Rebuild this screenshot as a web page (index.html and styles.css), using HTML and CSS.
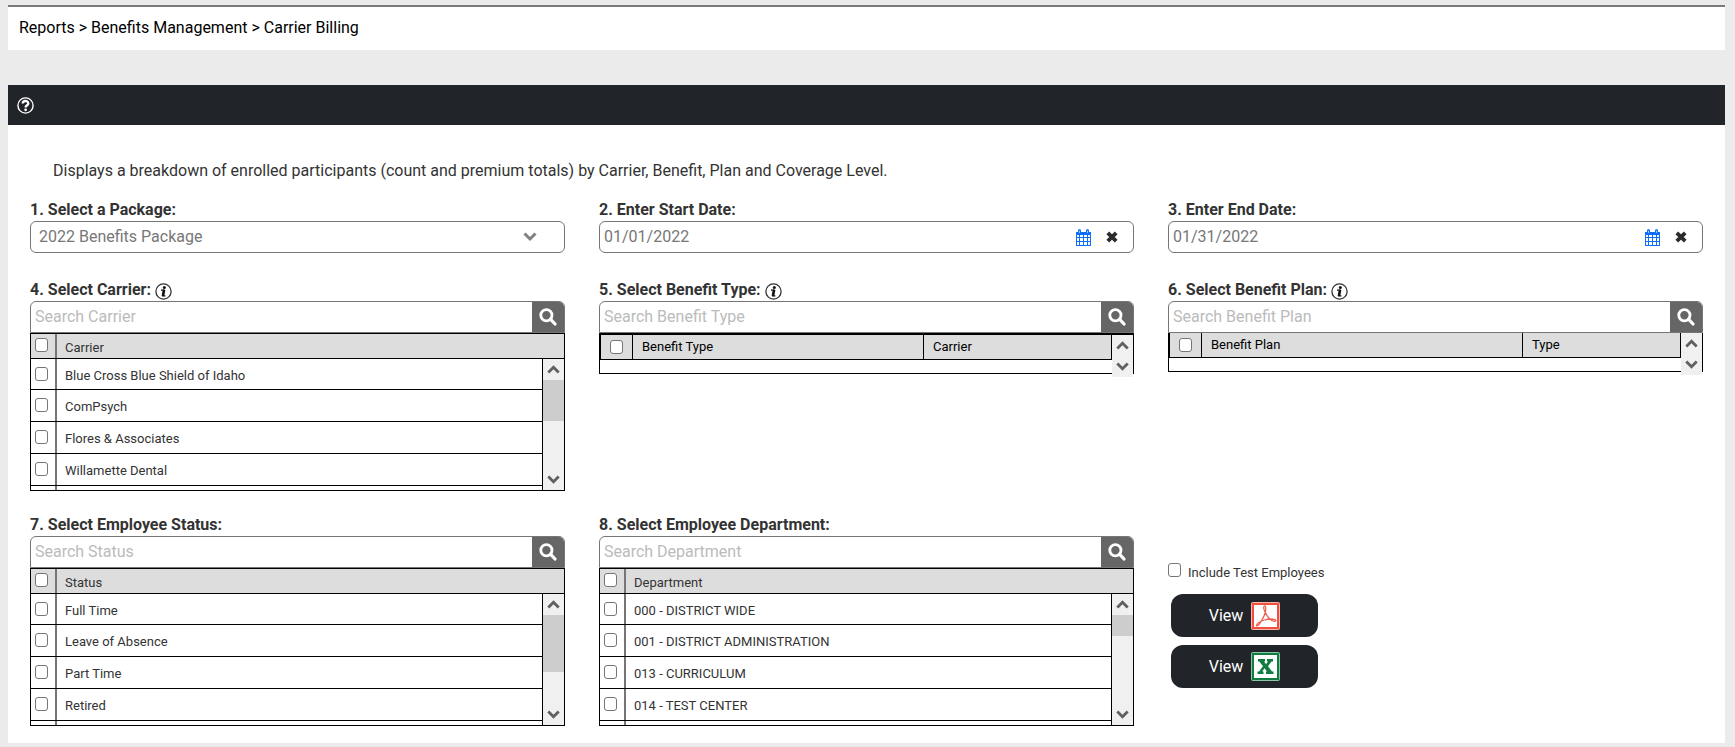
FILE: index.html
```html
<!DOCTYPE html>
<html lang="en">
<head>
    <meta charset="UTF-8">
    <meta name="viewport" content="width=device-width, initial-scale=1.0">
    <title>Carrier Billing</title>
    <link rel="stylesheet" href="styles.css">
</head>
<body>

<!-- Shared icons -->
<svg class="icon-defs" aria-hidden="true">
    <symbol id="icon-search" viewBox="0 0 18 18">
        <circle cx="7.4" cy="7.2" r="5.6" fill="none" stroke="#fff" stroke-width="2.8"/>
        <path d="M11.5 11.2l4.500 4.800" stroke="#fff" stroke-width="3.2" stroke-linecap="round"/>
    </symbol>
    <symbol id="icon-info" viewBox="0 0 17 17">
        <circle cx="8.5" cy="8.5" r="7.6" fill="#fff" stroke="#333" stroke-width="1.3"/>
        <circle cx="9.3" cy="4.4" r="1.5" fill="#111"/>
        <path d="M6 7.2h3.600M7 12.8h3.400" fill="none" stroke="#111" stroke-width="1.2"/>
        <path d="M9.1 6.800L7.9 13" stroke="#111" stroke-width="2.600"/>
    </symbol>
    <symbol id="icon-up" viewBox="0 0 12 8">
        <path d="M1.2 6.8L6 2l4.800 4.800" fill="none" stroke="#606060" stroke-width="2.6"/>
    </symbol>
    <symbol id="icon-down" viewBox="0 0 12 8">
        <path d="M1.200 1.200L6 6l4.800-4.800" fill="none" stroke="#606060" stroke-width="2.600"/>
    </symbol>
    <symbol id="icon-calendar" viewBox="0 0 15 17">
        <path d="M0 3h15v14H0z" fill="#0d6efd"/>
        <path d="M1 6h2v2H1zM4 6h3v2H4zM8 6h3v2H8zM12 6h2v2h-2zM1 9h2v3H1zM4 9h3v3H4zM8 9h3v3H8zM12 9h2v3h-2zM1 13h2v3H1zM4 13h3v3H4zM8 13h3v3H8zM12 13h2v3h-2z" fill="#fff"/>
        <path d="M3.500 1.500v2M11.500 1.500v2" stroke="#0d6efd" stroke-width="3" stroke-linecap="round"/>
        <path d="M3.500 1.500v2.500M11.500 1.500v2.500" stroke="#9cc4ff" stroke-width="1"/>
    </symbol>
    <symbol id="icon-clear" viewBox="0 0 12 12">
        <path d="M1.800 1.800l8.400 8.400M10.200 1.800l-8.400 8.400" stroke="#2b2b2b" stroke-width="3.800"/>
    </symbol>
</svg>

<nav class="breadcrumb">
    <a href="#">Reports</a> &gt; <a href="#">Benefits Management</a> &gt; <a href="#">Carrier Billing</a>
</nav>

<main class="panel">
    <div class="panel-header">
        <button type="button" class="icon-button" aria-label="Help">
            <svg width="17" height="17" viewBox="0 0 17 17">
                <circle cx="8.5" cy="8.5" r="7.600" fill="none" stroke="#fff" stroke-width="1.400"/>
                <path d="M5.700 6.600C5.700 3.200 11.300 3.200 11.300 6.400C11.300 8.300 8.600 8.300 8.600 10.600" fill="none" stroke="#fff" stroke-width="2.400"/>
                <circle cx="8.600" cy="12.800" r="1.400" fill="#fff"/>
            </svg>
        </button>
    </div>

    <form class="report-form">
        <p class="description">Displays a breakdown of enrolled participants (count and premium totals) by Carrier, Benefit, Plan and Coverage Level.</p>

        <div class="form-grid">
            <div class="field">
                <label class="field-label" for="package">1. Select a Package:</label>
                <div class="input-box">
                    <select id="package">
                        <option>2022 Benefits Package</option>
                    </select>
                    <svg class="select-arrow" viewBox="0 0 14 10"><path d="M1.500 1.500L7 7l5.500-5.500" fill="none" stroke="#808080" stroke-width="3"/></svg>
                </div>
            </div>
            <div class="field">
                <label class="field-label" for="start-date">2. Enter Start Date:</label>
                <div class="input-box">
                    <input type="text" id="start-date" value="01/01/2022">
                    <button type="button" class="icon-button" aria-label="Pick start date"><svg width="15" height="17"><use href="#icon-calendar"/></svg></button>
                    <button type="button" class="icon-button clear" aria-label="Clear start date"><svg width="12" height="12"><use href="#icon-clear"/></svg></button>
                </div>
            </div>
            <div class="field">
                <label class="field-label" for="end-date">3. Enter End Date:</label>
                <div class="input-box">
                    <input type="text" id="end-date" value="01/31/2022">
                    <button type="button" class="icon-button" aria-label="Pick end date"><svg width="15" height="17"><use href="#icon-calendar"/></svg></button>
                    <button type="button" class="icon-button clear" aria-label="Clear end date"><svg width="12" height="12"><use href="#icon-clear"/></svg></button>
                </div>
            </div>

            <div class="field">
                <label class="field-label" for="search-carrier">4. Select Carrier: <svg class="info"><use href="#icon-info"/></svg></label>
                <div class="search-box">
                    <input type="text" id="search-carrier" placeholder="Search Carrier">
                    <button type="button" aria-label="Search"><svg width="18" height="18"><use href="#icon-search"/></svg></button>
                </div>
                <div class="list">
                    <label class="list-header"><span class="check"><input type="checkbox"></span><span class="text">Carrier</span></label>
                    <div class="list-body">
                        <div class="rows">
                            <label class="row"><span class="check"><input type="checkbox"></span><span class="text">Blue Cross Blue Shield of Idaho</span></label>
                            <label class="row"><span class="check"><input type="checkbox"></span><span class="text">ComPsych</span></label>
                            <label class="row"><span class="check"><input type="checkbox"></span><span class="text">Flores &amp; Associates</span></label>
                            <label class="row"><span class="check"><input type="checkbox"></span><span class="text">Willamette Dental</span></label>
                            <div class="row"><span class="check"></span></div>
                        </div>
                        <div class="scrollbar">
                            <svg><use href="#icon-up"/></svg>
                            <span class="track"><span class="thumb" style="height: 46%"></span></span>
                            <svg><use href="#icon-down"/></svg>
                        </div>
                    </div>
                </div>
            </div>
            <div class="field">
                <label class="field-label" for="search-type">5. Select Benefit Type: <svg class="info"><use href="#icon-info"/></svg></label>
                <div class="search-box">
                    <input type="text" id="search-type" placeholder="Search Benefit Type">
                    <button type="button" aria-label="Search"><svg width="18" height="18"><use href="#icon-search"/></svg></button>
                </div>
                <div class="grid-list thick">
                    <table>
                        <tr><th class="check-col"><input type="checkbox" aria-label="Select all benefit types"></th><th>Benefit Type</th><th class="carrier-col">Carrier</th></tr>
                    </table>
                    <div class="scrollbar">
                        <svg><use href="#icon-up"/></svg>
                        <svg><use href="#icon-down"/></svg>
                    </div>
                </div>
            </div>
            <div class="field">
                <label class="field-label" for="search-plan">6. Select Benefit Plan:<svg class="info"><use href="#icon-info"/></svg></label>
                <div class="search-box">
                    <input type="text" id="search-plan" placeholder="Search Benefit Plan">
                    <button type="button" aria-label="Search"><svg width="18" height="18"><use href="#icon-search"/></svg></button>
                </div>
                <div class="grid-list">
                    <table>
                        <tr><th class="check-col"><input type="checkbox" aria-label="Select all benefit plans"></th><th>Benefit Plan</th><th class="type-col">Type</th></tr>
                    </table>
                    <div class="scrollbar">
                        <svg><use href="#icon-up"/></svg>
                        <svg><use href="#icon-down"/></svg>
                    </div>
                </div>
            </div>

            <div class="field">
                <label class="field-label" for="search-status">7. Select Employee Status:</label>
                <div class="search-box">
                    <input type="text" id="search-status" placeholder="Search Status">
                    <button type="button" aria-label="Search"><svg width="18" height="18"><use href="#icon-search"/></svg></button>
                </div>
                <div class="list">
                    <label class="list-header"><span class="check"><input type="checkbox"></span><span class="text">Status</span></label>
                    <div class="list-body">
                        <div class="rows">
                            <label class="row"><span class="check"><input type="checkbox"></span><span class="text">Full Time</span></label>
                            <label class="row"><span class="check"><input type="checkbox"></span><span class="text">Leave of Absence</span></label>
                            <label class="row"><span class="check"><input type="checkbox"></span><span class="text">Part Time</span></label>
                            <label class="row"><span class="check"><input type="checkbox"></span><span class="text">Retired</span></label>
                            <div class="row"><span class="check"></span></div>
                        </div>
                        <div class="scrollbar">
                            <svg><use href="#icon-up"/></svg>
                            <span class="track"><span class="thumb" style="height: 64%"></span></span>
                            <svg><use href="#icon-down"/></svg>
                        </div>
                    </div>
                </div>
            </div>
            <div class="field">
                <label class="field-label" for="search-department">8. Select Employee Department:</label>
                <div class="search-box">
                    <input type="text" id="search-department" placeholder="Search Department">
                    <button type="button" aria-label="Search"><svg width="18" height="18"><use href="#icon-search"/></svg></button>
                </div>
                <div class="list">
                    <label class="list-header"><span class="check"><input type="checkbox"></span><span class="text">Department</span></label>
                    <div class="list-body">
                        <div class="rows">
                            <label class="row"><span class="check"><input type="checkbox"></span><span class="text">000 - DISTRICT WIDE</span></label>
                            <label class="row"><span class="check"><input type="checkbox"></span><span class="text">001 - DISTRICT ADMINISTRATION</span></label>
                            <label class="row"><span class="check"><input type="checkbox"></span><span class="text">013 - CURRICULUM</span></label>
                            <label class="row"><span class="check"><input type="checkbox"></span><span class="text">014 - TEST CENTER</span></label>
                            <div class="row"><span class="check"></span></div>
                        </div>
                        <div class="scrollbar">
                            <svg><use href="#icon-up"/></svg>
                            <span class="track"><span class="thumb" style="height: 24%"></span></span>
                            <svg><use href="#icon-down"/></svg>
                        </div>
                    </div>
                </div>
            </div>
            <div class="actions">
                <label class="include"><input type="checkbox"> <span>Include Test Employees</span></label>
                <button type="button" class="view-button">View
                    <svg width="29" height="28" viewBox="0 0 29 28">
                        <rect x=".5" y=".5" width="28" height="27" rx="1" fill="#f0513f" stroke="#f9b4ab"/>
                        <rect x="3" y="3" width="23" height="22" fill="#fff"/>
                        <path d="M14 4c-2 0-1.500 3 .3 6.500S19 18 22 19s3.500-1 1.500-1.500-6-.8-10 .5-7.500 3.800-8 5 1.500 1 3-1.200 4.500-7 5.500-10.500S15 4 14 4z" fill="none" stroke="#f0604f" stroke-width="1.300"/>
                    </svg>
                </button>
                <button type="button" class="view-button">View
                    <svg width="29" height="29" viewBox="0 0 29 29">
                        <rect x=".5" y=".5" width="28" height="28" rx="1" fill="#107c41" stroke="#8cc7a5"/>
                        <rect x="3" y="3" width="23" height="23" fill="#fff"/>
                        <path d="M7 7h7v2.500h-1l2 2.800 2-2.800h-1V7h6v2.500h-1.500L17 14.300l4 5.200h1.500V22H15v-2.500h1l-2.500-3.300-2.300 3.300h1.300V22H6.500v-2.500H8l4-5.200-3.700-4.800H7z" fill="#107c41"/>
                    </svg>
                </button>
            </div>
        </div>
    </form>
</main>

</body>
</html>
```
FILE: styles.css
```css
* {
    box-sizing: border-box;
}
body {
    margin: 0;
    padding: 5px 10px 4px 8px;
    background-color: #ebebeb;
    color: #333;
    font-family: Roboto, Arial, sans-serif;
    font-size: 16px;
    line-height: 20px;
}
input, select, button {
    font: inherit;
    color: inherit;
}
button {
    cursor: pointer;
}
.icon-defs {
    display: none;
}
.breadcrumb {
    margin-bottom: 35px;
    padding: 11px;
    height: 45px;
    border-top: 2px solid #7a7a7a;
    background-color: #fff;
    color: #000;
}
.breadcrumb a {
    color: #000;
    text-decoration: none;
}
.panel {
    background-color: #fff;
}
.panel-header {
    display: flex;
    align-items: center;
    height: 40px;
    padding: 0 9px;
    background-color: #212529;
}
.icon-button {
    display: flex;
    padding: 0;
    border: none;
    background: none;
}
.report-form {
    padding: 36px 22px 17px;
}
.description {
    margin: 0 0 18px;
    padding-left: 23px;
}
.form-grid {
    display: grid;
    grid-template-columns: repeat(3, minmax(0, 1fr));
    column-gap: 34px;
}
.field {
    margin-bottom: 26px;
}
.form-grid .field:nth-child(n+4) {
    margin-bottom: 23px;
}
.form-grid .field:nth-child(n+7) {
    margin-bottom: 0;
}
.field-label {
    display: flex;
    align-items: center;
    gap: 4px;
    height: 22px;
    font-weight: bold;
}
.info {
    width: 17px;
    height: 17px;
    margin-top: 2px;
}

/* Text boxes */
.input-box, .search-box {
    display: flex;
    align-items: center;
    height: 32px;
    border: 1px solid #767676;
    border-radius: 6px;
    background-color: #fff;
    color: #777;
    overflow: hidden;
}
.input-box {
    padding-right: 15px;
}
.input-box input, .input-box select, .search-box input {
    flex: 1;
    min-width: 0;
    padding: 0 4px;
    border: none;
    outline: none;
    background: none;
}
.input-box select {
    appearance: none;
    padding: 0 8px;
}
.select-arrow {
    width: 14px;
    height: 10px;
    margin-right: 12px;
}
.clear {
    margin: 0 0 0 15px;
}
.search-box {
    border-radius: 6px 6px 0 0;
}
.search-box input::placeholder {
    color: #bbb;
}
.search-box button {
    display: flex;
    align-items: center;
    justify-content: center;
    width: 32px;
    height: 32px;
    padding: 0;
    border: none;
    background-color: #666;
}
input[type="checkbox"] {
    appearance: none;
    width: 13px;
    height: 14px;
    margin: 0;
    border: 1px solid #767676;
    border-radius: 3px;
    background-color: #fff;
}

/* Scrolling check lists */
.list {
    border: 1px solid #000;
    font-size: 13px;
}
.list-header, .row {
    display: flex;
    height: 32px;
    border-bottom: 1px solid #000;
}
.row:first-child {
    height: 31px;
}
.list-header {
    height: 25px;
    background-color: #ddd;
}
.list-body {
    display: flex;
    height: 131px;
}
.rows {
    flex: 1;
    overflow: hidden;
}
.check {
    width: 26px;
    padding: 8px 4px;
    border-right: 2px solid #767676;
    line-height: 0;
}
.text {
    padding: 7px 8px;
}
.list-header .check {
    padding-top: 4px;
}
.list-header .text {
    padding-top: 4px;
}
.scrollbar {
    display: flex;
    flex-direction: column;
    justify-content: space-between;
    width: 22px;
    border-left: 1px solid #000;
    background-color: #f0f0f0;
}
.scrollbar svg {
    width: 100%;
    height: 21px;
    padding: 6px 4px;
}
.track {
    flex: 1;
}
.thumb {
    display: block;
    background-color: #cdcdcd;
}

/* Benefit tables */
.grid-list {
    display: flex;
    height: 39px;
    border: 1px solid #000;
    border-top: none;
    color: #000;
    font-size: 13px;
}
.grid-list.thick {
    height: 41px;
    border-top: 2px solid #000;
}
.grid-list table {
    flex: 1;
    height: 25px;
    table-layout: fixed;
    border-collapse: collapse;
}
.grid-list th {
    padding: 0 9px;
    border: 1px solid #000;
    border-top: none;
    background-color: #ddd;
    font-weight: normal;
    text-align: left;
}
.grid-list .check-col {
    width: 32px;
    line-height: 0;
}
.grid-list .carrier-col {
    width: 188px;
}
.grid-list .type-col {
    width: 158px;
}
.grid-list .scrollbar {
    height: 42px;
    width: 21px;
    border-left: none;
}

.actions {
    display: flex;
    flex-direction: column;
    align-items: flex-start;
    padding-top: 49px;
}
.include {
    display: flex;
    gap: 7px;
    margin-bottom: 11px;
    font-size: 13px;
}
.view-button {
    display: flex;
    align-items: center;
    justify-content: center;
    gap: 8px;
    width: 147px;
    height: 43px;
    margin: 0 3px 8px;
    border: none;
    border-radius: 12px;
    background-color: #212529;
    color: #fff;
}
```
